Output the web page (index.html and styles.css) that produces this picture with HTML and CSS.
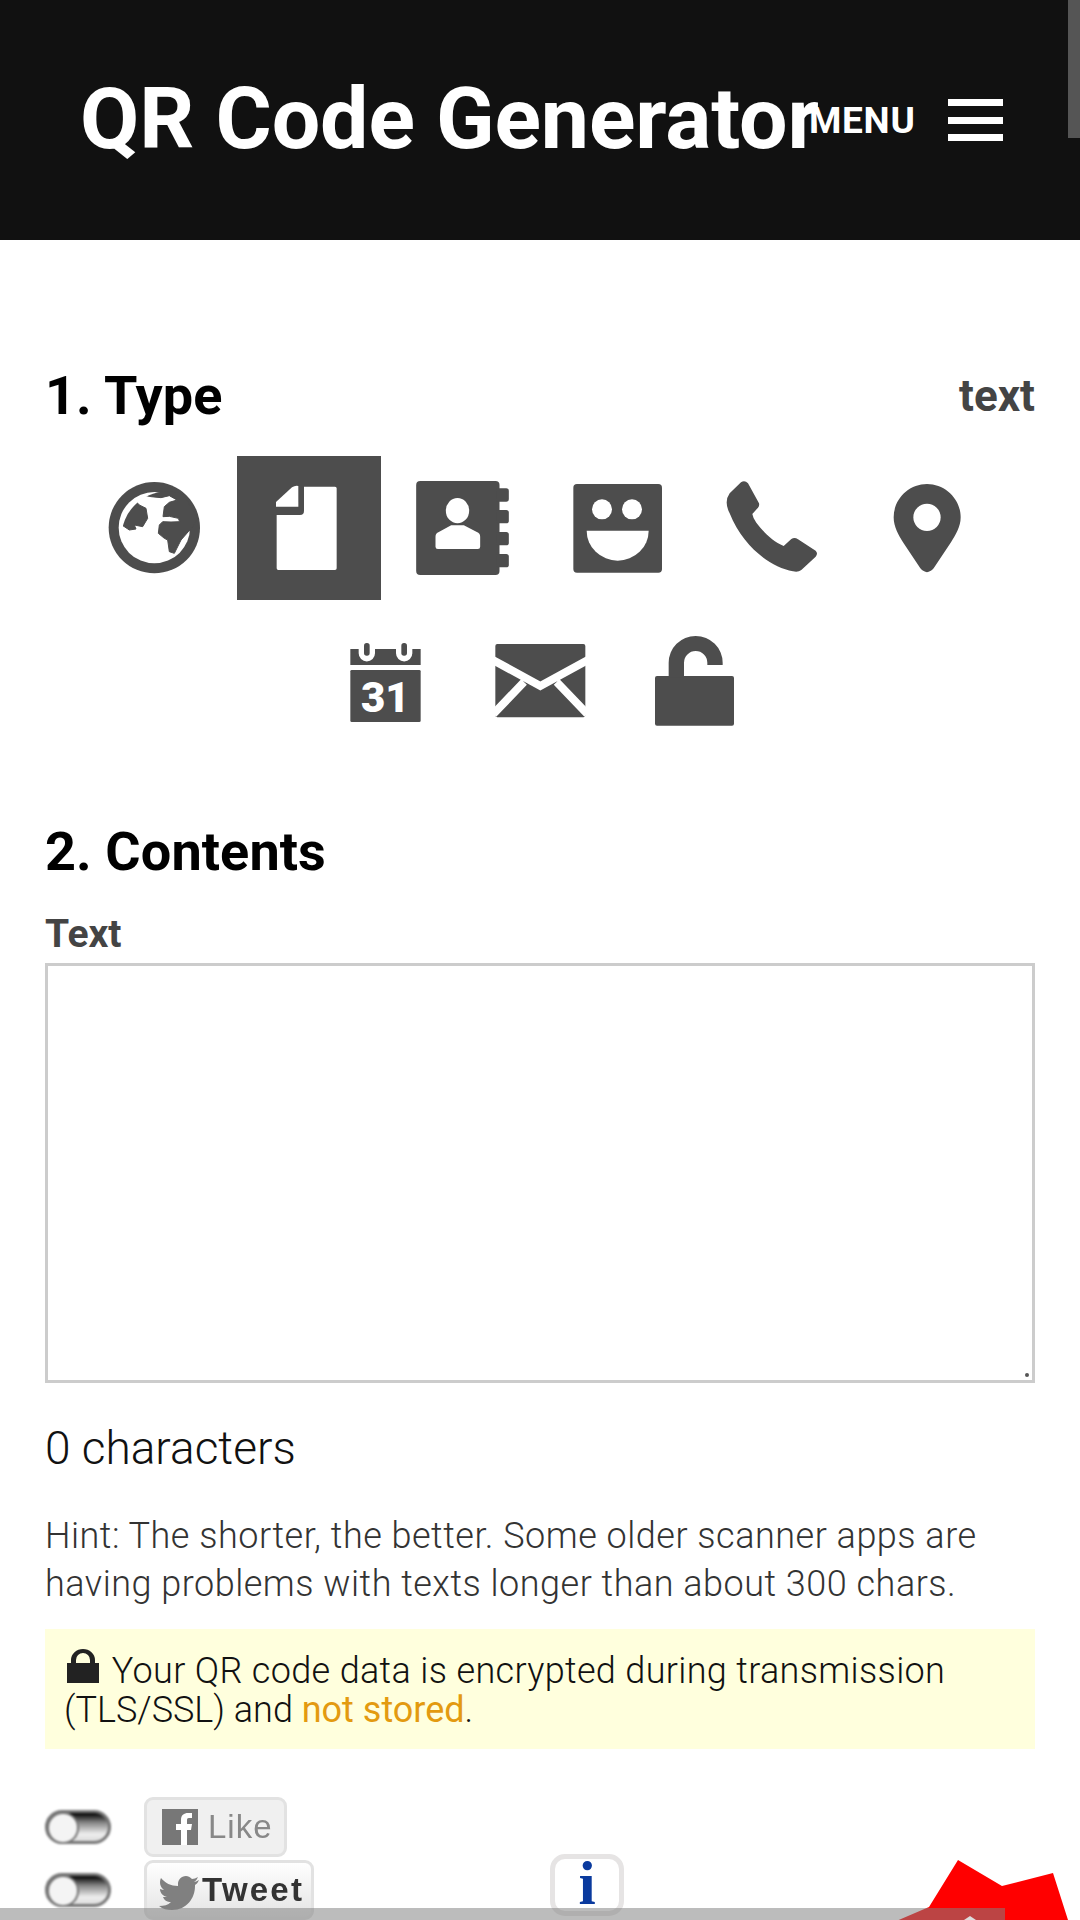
FILE: index.html
```html
<!DOCTYPE html>
<html lang="en">
<head>
<meta charset="utf-8">
<title>QR Code Generator</title>
<link rel="stylesheet" href="styles.css">
</head>
<body>
<div class="page">
  <header class="topbar">
    <h1 class="brand">QR Code Generator</h1>
    <div class="menu"><span class="menu-label">MENU</span><span class="burger"><i></i><i></i><i></i></span></div>
  </header>
  <main class="content">
    <div class="type-head"><h2 class="section-title">1. Type</h2><span class="type-name">text</span></div>
    <div class="types">
      <div class="type-cell"><svg viewBox="-57 -57 432 432"><circle class="ic" cx="160" cy="158" r="137"/><circle class="wh" cx="160" cy="158" r="107"/><path class="ic land" d="M40 143L55 145L85 165L105 162L100 150L125 155L140 130L135 100L115 90L98 72L125 60L150 65L180 68L205 62L228 75L205 82L190 95L186 125L205 124L232 130L236 140L210 141L185 140L175 150L172 175L190 190L200 195L205 230L220 235L240 195L262 170L270 163L290 130L230 30L80 30Z"/><path class="ic land" d="M110 170L150 175L172 205L145 250L130 262L122 215L105 182Z"/></svg></div>
      <div class="type-cell active"><svg viewBox="471 48 432 432"><path class="wh" d="M590 225H660Q672 225 672 212V140H765Q770 140 770 145V385Q770 390 765 390H595Q590 390 590 385Z"/><path class="wh" d="M588 186L636 142Q645 136 655 138V200H588Z"/></svg></div>
      <div class="type-cell"><svg viewBox="934.5 48 432 432"><rect class="ic" x="1010" y="123" width="250" height="282" rx="12"/><rect class="ic" x="1250" y="145" width="38" height="40" rx="8"/><rect class="ic" x="1250" y="210" width="38" height="40" rx="8"/><rect class="ic" x="1250" y="276" width="38" height="40" rx="8"/><rect class="ic" x="1250" y="342" width="38" height="40" rx="8"/><ellipse class="wh" cx="1134" cy="212" rx="35" ry="38"/><path class="wh" d="M1068 320V290Q1068 280 1078 276L1115 256H1153L1192 276Q1202 280 1202 290V320Q1202 327 1195 327H1075Q1068 327 1068 320Z"/></svg></div>
      <div class="type-cell"><svg viewBox="48 48 432 432"><rect class="ic" x="130" y="132" width="266" height="266" rx="11"/><circle class="wh" cx="216" cy="208" r="30"/><circle class="wh" cx="306" cy="208" r="30"/><path class="wh" d="M170 272H356A93 90 0 0 1 170 272Z"/></svg></div>
      <div class="type-cell"><svg viewBox="511 48 432 432"><path class="ic" d="M634 127Q645 119 655 130L688 190Q690 197 685 203L668 222Q670 235 680 248C705 280 730 305 762 318L785 297Q795 291 805 298L858 332Q866 340 858 350L815 390Q805 398 790 394C720 380 640 320 600 220Q582 185 600 160Z"/></svg></div>
      <div class="type-cell"><svg viewBox="974 48 432 432"><path class="ic" d="M1190 132C1245 132 1291 177 1291 232C1291 262 1275 285 1262 307L1210 385Q1190 408 1170 385L1118 307C1105 285 1090 262 1090 232C1090 177 1135 132 1190 132Z"/><circle class="wh" cx="1190" cy="232" r="41"/></svg></div>
      <div class="type-cell"><svg viewBox="702 510 432 432"><path class="ic" d="M811 627H836V640A24 24 0 0 0 885 640V627H948V640A24 24 0 0 0 997 640V627H1022V675H811Z"/><rect class="ic" x="852" y="609" width="17" height="38" rx="8"/><rect class="ic" x="964" y="609" width="17" height="38" rx="8"/><rect class="ic" x="811" y="690" width="211" height="156" rx="4"/><text class="cal-num" x="916" y="815" text-anchor="middle">31</text></svg></div>
      <div class="type-cell"><svg viewBox="1167 510 432 432"><rect class="ic" x="1246" y="612" width="270" height="220" rx="6"/><path class="mail-line" d="M1525 659L1381 738L1237 659M1430 726L1522 822M1332 726L1240 822"/></svg></div>
      <div class="type-cell"><svg viewBox="279 510 432 432"><rect class="ic" x="375" y="708" width="237" height="149" rx="6"/><path class="ic" d="M416 712V668A81 80 0 0 1 578 668V675H532V668A35 35 0 0 0 462 668V712Z"/></svg></div>
    </div>
    <h2 class="section-title contents-title">2. Contents</h2>
    <label class="field-label" for="txt">Text</label>
    <div class="text-wrap"><textarea class="text-input" id="txt"></textarea></div>
    <p class="counter">0 characters</p>
    <p class="hint">Hint: The shorter, the better. Some older scanner apps are having problems with texts longer than about 300 chars.</p>
    <div class="notice">
      <svg class="notice-lock" viewBox="0 0 32 34"><path d="M0 14H4V11A12 11 0 0 1 28 11V14H32V34H0ZM9 14H23V11A7 7 0 0 0 9 11Z"/></svg>
      <span class="notice-first">Your QR code data is encrypted during transmission</span><br><span class="notice-second">(TLS/SSL) and <a class="notice-link">not stored</a>.</span>
    </div>
    <div class="social">
      <div class="social-row">
        <span class="toggle"><i></i></span>
        <span class="like"><svg class="fb" viewBox="0 0 36 36"><rect width="36" height="36" fill="#777"/><path fill="#fff" d="M19 36V21H14V15H19V11C19 6 22 4 26 4H30V9H27C25 9 25 10 25 12V15H30L29 21H25V36Z"/></svg>Like</span>
      </div>
      <div class="social-row">
        <span class="toggle"><i></i></span>
        <span class="tweet"><svg class="bird" viewBox="0 0 40 34"><path fill="#808080" d="M40 4C38 5 36 6 35 6C37 5 38 3 39 1C37 2 35 3 33 3C31 1 29 0 27 0C22 0 19 4 19 8V10C12 10 6 7 2 2C0 6 1 11 5 14C3 14 2 13 1 13C1 17 4 20 8 21C7 21 5 21 4 21C5 24 8 26 12 26C9 29 5 30 0 30C4 33 8 34 13 34C28 34 36 22 36 10V9C38 8 39 6 40 4Z"/></svg>Tweet</span>
        <span class="info">i</span>
      </div>
    </div>
  </main>
  <div class="scroll-thumb"></div>
  <svg class="burst" viewBox="0 0 220 70"><polygon points="0,68 49,47 78,0 122,26 173,13 188,60 190,70 0,70" fill="#f00"/></svg>
  <div class="bottom-bar"><svg class="chevron" viewBox="0 0 24 8"><path d="M0 8L12 0L24 8H18L12 4L6 8Z" fill="#ddd"/></svg></div>
</div>
</body>
</html>
```
FILE: styles.css
```css
* { box-sizing: border-box; }
html, body { margin: 0; padding: 0; background: #fff; }
body { font-family: Roboto, "Noto Sans", sans-serif; color: #222; }
.page { position: relative; width: 1080px; height: 1920px; overflow: hidden; }

.topbar { height: 240px; background: #111; display: flex; align-items: center; padding-left: 80px; }
.brand { margin: -2px 0 0; flex: 0 0 728px; white-space: nowrap; color: #fff; font-size: 86px; font-weight: 700; letter-spacing: -0.1px; line-height: 1; }
.menu { display: flex; align-items: center; color: #fff; margin-left: -10px; }
.menu-label { font-size: 37px; font-weight: 700; letter-spacing: 0.7px; margin-right: 33px; }
.burger { display: flex; flex-direction: column; gap: 10.5px; width: 55px; }
.burger i { display: block; height: 7px; background: #fff; }

.content { padding: 0 45px; }
.type-head { display: flex; justify-content: space-between; align-items: center; padding-top: 124px; }
.section-title { margin: 0; color: #000; font-size: 54px; font-weight: 700; line-height: 64px; letter-spacing: 0.1px; }
.type-name { color: #444; font-size: 44px; font-weight: 700; }
.types { display: flex; flex-wrap: wrap; justify-content: center; gap: 10px 10.5px; margin-top: 28px; padding-left: 1px; }
.type-cell { width: 144px; height: 144px; }
.type-cell svg { display: block; width: 144px; height: 144px; }
.type-cell.active { background: #4d4d4d; }
.ic { fill: #4d4d4d; }
.wh { fill: #fff; }
.land { clip-path: circle(137px at 160px 158px); stroke: #4d4d4d; stroke-width: 3; stroke-linejoin: round; }
.cal-num { fill: #fff; font-family: Roboto, sans-serif; font-size: 126px; font-weight: 900; }
.mail-line { fill: none; stroke: #fff; stroke-width: 24; }

.contents-title { margin-top: 66px; }
.field-label { display: block; margin-top: 28px; color: #444; font-size: 39px; font-weight: 700; line-height: 44px; }
.text-wrap { position: relative; margin-top: 7px; }
.text-wrap::after { content: ""; position: absolute; right: 6px; bottom: 6px; width: 4px; height: 4px; border-radius: 50%; background: #555; }
.text-input { display: block; width: 990px; height: 420px; border: 3px solid #ccc; background: #fff; resize: none; }
.counter { margin: 38px 0 0; font-size: 46px; line-height: 54px; font-weight: 300; color: #111; }
.hint { margin: 37px 0 0; font-size: 36px; line-height: 48px; font-weight: 300; letter-spacing: 0.5px; color: #333; }
.notice { margin-top: 21px; height: 120px; padding: 20px 19px; background: #ffd; font-size: 36px; line-height: 39px; font-weight: 300; color: #111; }
.notice-first { letter-spacing: 0.34px; }
.notice-lock { width: 32px; height: 34px; fill: #222; margin: 0 4px 0 3px; }
.notice-link { color: #e39a10; font-weight: 400; }

.social { margin-top: 48px; display: flex; flex-direction: column; gap: 3px; }
.social-row { display: flex; align-items: center; height: 60px; }
.toggle { position: relative; flex: none; width: 66px; height: 34px; margin-right: 33px; border-radius: 17px; border: 3px solid #777; background: linear-gradient(#000, #888 35%, #eee 75%, #ddd); filter: blur(.8px); }
.toggle i { position: absolute; left: -1px; top: -1px; width: 32px; height: 32px; border-radius: 50%; background: #f4f4f4; border: 2px solid #777; }
.like, .tweet { display: flex; align-items: center; height: 60px; border: 3px solid #e2e2e2; border-radius: 9px; background: #f0f0f0; font-family: "Liberation Sans", Arial, sans-serif; filter: blur(.7px); }
.like { width: 143px; padding-left: 15px; font-size: 33px; color: #888; letter-spacing: 1px; }
.fb { width: 36px; height: 36px; margin-right: 10px; }
.tweet { width: 170px; padding-left: 12px; font-size: 33px; font-weight: 700; color: #333; letter-spacing: 2.2px; background: linear-gradient(#fff, #e4e4e4); }
.bird { width: 40px; height: 34px; margin: 6px 3px 0 0; }
.info { flex: none; width: 74px; height: 62px; margin-left: 236px; margin-top: -11px; border: 5px solid #e6e4e4; border-radius: 15px; background: #fff; color: #0a3a9e; font-family: "Liberation Serif", serif; font-size: 62px; font-weight: 700; line-height: 48px; text-align: center; }

.scroll-thumb { position: absolute; top: 0; right: 0; width: 12px; height: 138px; background: #555; }
.burst { position: absolute; left: 880px; top: 1860px; width: 220px; height: 70px; }
.bottom-bar { position: absolute; left: 0; bottom: 0; width: 1005px; height: 12px; background: rgba(128,128,128,.53); }
.chevron { position: absolute; left: 958px; top: 8px; width: 24px; height: 8px; }
```
